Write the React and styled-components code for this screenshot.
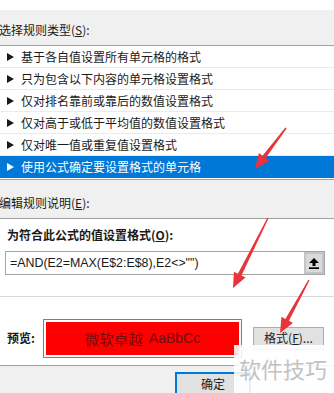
import React from 'react';
import styled, { createGlobalStyle } from 'styled-components';

const Global = createGlobalStyle`
  html, body { margin: 0; padding: 0; background: #f0f0f0; }
  body {
    font-family: "Noto Sans CJK SC", "Noto Sans", sans-serif;
    font-size: 12px;
    color: #1a1a1a;
  }
  * { box-sizing: border-box; }
`;

const Page = styled.div`
  position: relative;
  width: 334px;
  height: 393px;
  overflow: hidden;
  background: #f0f0f0;
  display: flex;
  flex-direction: column;
`;

const TopStrip = styled.div`
  flex: none;
  height: 10px;
  background: #ffffff;
`;

const SectionLabel = styled.div`
  flex: none;
  height: ${p => p.$h}px;
  display: flex;
  align-items: flex-end;
  padding-bottom: ${p => p.$pb}px;
  margin-left: -1px;
  line-height: 16px;
  white-space: nowrap;
`;

const List = styled.div`
  flex: none;
  background: #ffffff;
  border-top: 1px solid #a0a0a0;
  border-bottom: 1px solid #a0a0a0;
  padding-bottom: 1px;
`;

const Row = styled.div`
  height: 22px;
  display: flex;
  align-items: center;
  gap: 7px;
  padding-left: 7px;
  white-space: nowrap;
  line-height: 16px;
  background: ${p => (p.$selected ? '#0078d7' : '#ffffff')};
  color: ${p => (p.$selected ? '#ffffff' : '#1a1a1a')};
  border-bottom: 1px solid ${p => (p.$selected ? '#0078d7' : '#ebebeb')};
`;

const Marker = styled.svg`
  flex: none;
  width: 7px;
  height: 8px;
  fill: currentColor;
`;

const Panel = styled.div`
  flex: none;
  height: 148px;
  background: #ffffff;
  border-top: 1px solid #a0a0a0;
  border-bottom: 1px solid #a0a0a0;
  display: flex;
  flex-direction: column;
`;

const BoldLabel = styled.div`
  margin: 8px 0 0 7px;
  font-weight: 700;
  line-height: 16px;
  white-space: nowrap;
`;

const FormulaBox = styled.div`
  margin: 8px 0 0 5px;
  width: 320px;
  height: 24px;
  border: 1px solid #a5a5a5;
  display: flex;
  align-items: stretch;
`;

const FormulaText = styled.div`
  flex: 1;
  display: flex;
  align-items: center;
  padding-left: 4px;
  font-family: "Liberation Sans", Arial, sans-serif;
  font-size: 12.4px;
  color: #1a1a1a;
  white-space: nowrap;
`;

const UploadButton = styled.div`
  flex: none;
  width: 20px;
  background: #dadada;
  border: 2px solid #c4c4c4;
  display: flex;
  align-items: center;
  justify-content: center;
`;

const Divider = styled.div`
  margin-top: 21px;
  height: 1px;
  background: #d9d9d9;
`;

const PreviewRow = styled.div`
  flex: 1;
  display: flex;
  align-items: center;
  padding: 14px 0 0 7px;
`;

const PreviewLabel = styled.div`
  width: 36px;
  font-weight: 700;
  line-height: 16px;
  white-space: nowrap;
`;

const PreviewFrame = styled.div`
  width: 199px;
  height: 39px;
  border: 1px solid #7f7f7f;
  padding: 2px;
  background: #ffffff;
`;

const PreviewFill = styled.div`
  width: 100%;
  height: 100%;
  background: #ff0000;
  display: flex;
  align-items: center;
  justify-content: center;
  gap: 6px;
  font-size: 14.5px;
  color: #6e0e0e;
  white-space: nowrap;
`;

const Latin = styled.span`
  font-family: "Liberation Sans", Arial, sans-serif;
  font-size: 14px;
`;

const Button = styled.div`
  flex: none;
  width: ${p => p.$w}px;
  height: ${p => p.$h}px;
  margin-left: ${p => p.$ml}px;
  margin-top: ${p => p.$mt || 0}px;
  background: #e1e1e1;
  border: 1px solid ${p => (p.$primary ? '#0078d7' : '#adadad')};
  box-shadow: ${p => (p.$primary ? 'inset 0 0 0 1px #0078d7' : 'none')};
  display: flex;
  align-items: center;
  justify-content: center;
  line-height: 16px;
  white-space: nowrap;
`;

const BottomBar = styled.div`
  flex: 1;
  display: flex;
  align-items: flex-start;
`;

const Watermark = styled.div`
  position: absolute;
  left: 234px;
  top: 345px;
  right: 0;
  bottom: 0;
  background: rgba(255, 255, 255, 0.88);
  padding: 8px 0 0 5px;
  font-size: 22px;
  line-height: 30px;
  color: #c2c2c2;
  white-space: nowrap;
`;

const Overlay = styled.svg`
  position: absolute;
  left: 0;
  top: 0;
  width: 334px;
  height: 393px;
  pointer-events: none;
`;

function arrowPoints(x1, y1, x2, y2, headLen = 15, headHalf = 6.5, tailW = 1.4, neckW = 4) {
  const dx = x2 - x1;
  const dy = y2 - y1;
  const len = Math.hypot(dx, dy);
  const ux = dx / len;
  const uy = dy / len;
  const nx = -uy;
  const ny = ux;
  const bx = x2 - ux * headLen;
  const by = y2 - uy * headLen;
  const pts = [
    [x1 + nx * tailW / 2, y1 + ny * tailW / 2],
    [bx + nx * neckW / 2, by + ny * neckW / 2],
    [bx + nx * headHalf, by + ny * headHalf],
    [x2, y2],
    [bx - nx * headHalf, by - ny * headHalf],
    [bx - nx * neckW / 2, by - ny * neckW / 2],
    [x1 - nx * tailW / 2, y1 - ny * tailW / 2],
  ];
  return pts.map(p => p.map(v => v.toFixed(1)).join(',')).join(' ');
}

const Arrow = ({ from, to }) => (
  <polygon points={arrowPoints(from[0], from[1], to[0], to[1])} fill="#e8343a" />
);

const rules = [
  '基于各自值设置所有单元格的格式',
  '只为包含以下内容的单元格设置格式',
  '仅对排名靠前或靠后的数值设置格式',
  '仅对高于或低于平均值的数值设置格式',
  '仅对唯一值或重复值设置格式',
  '使用公式确定要设置格式的单元格',
];

export default function App() {
  return (
    <>
      <Global />
      <Page>
        <TopStrip />
        <SectionLabel $h={35} $pb={7}>
          选择规则类型(<u>S</u>):
        </SectionLabel>
        <List>
          {rules.map((r, i) => (
            <Row key={r} $selected={i === rules.length - 1}>
              <Marker viewBox="0 0 7 8">
                <polygon points="0,0 7,4 0,8" />
              </Marker>
              {r}
            </Row>
          ))}
        </List>
        <SectionLabel $h={38} $pb={7}>
          编辑规则说明(<u>E</u>):
        </SectionLabel>
        <Panel>
          <BoldLabel>
            为符合此公式的值设置格式(<u>O</u>):
          </BoldLabel>
          <FormulaBox>
            <FormulaText>=AND(E2=MAX(E$2:E$8),E2&lt;&gt;"")</FormulaText>
            <UploadButton>
              <svg width="10" height="11" viewBox="0 0 10 11">
                <polygon points="5,0 10,5 6.5,5 6.5,8 3.5,8 3.5,5 0,5" fill="#000" />
                <rect x="0" y="9.3" width="10" height="1.7" fill="#000" />
              </svg>
            </UploadButton>
          </FormulaBox>
          <Divider />
          <PreviewRow>
            <PreviewLabel>预览:</PreviewLabel>
            <PreviewFrame>
              <PreviewFill>
                <span>微软卓越</span>
                <Latin>AaBbCc</Latin>
              </PreviewFill>
            </PreviewFrame>
            <Button $w={71} $h={23} $ml={11}>
              格式(<u>F</u>)...
            </Button>
          </PreviewRow>
        </Panel>
        <BottomBar>
          <Button $primary $w={76} $h={24} $ml={175} $mt={6}>
            确定
          </Button>
        </BottomBar>
        <Watermark>软件技巧</Watermark>
        <Overlay viewBox="0 0 334 393">
          <Arrow from={[286, 128]} to={[255, 169]} />
          <Arrow from={[268, 218]} to={[233, 288]} />
          <Arrow from={[309, 280]} to={[280, 333]} />
        </Overlay>
      </Page>
    </>
  );
}
